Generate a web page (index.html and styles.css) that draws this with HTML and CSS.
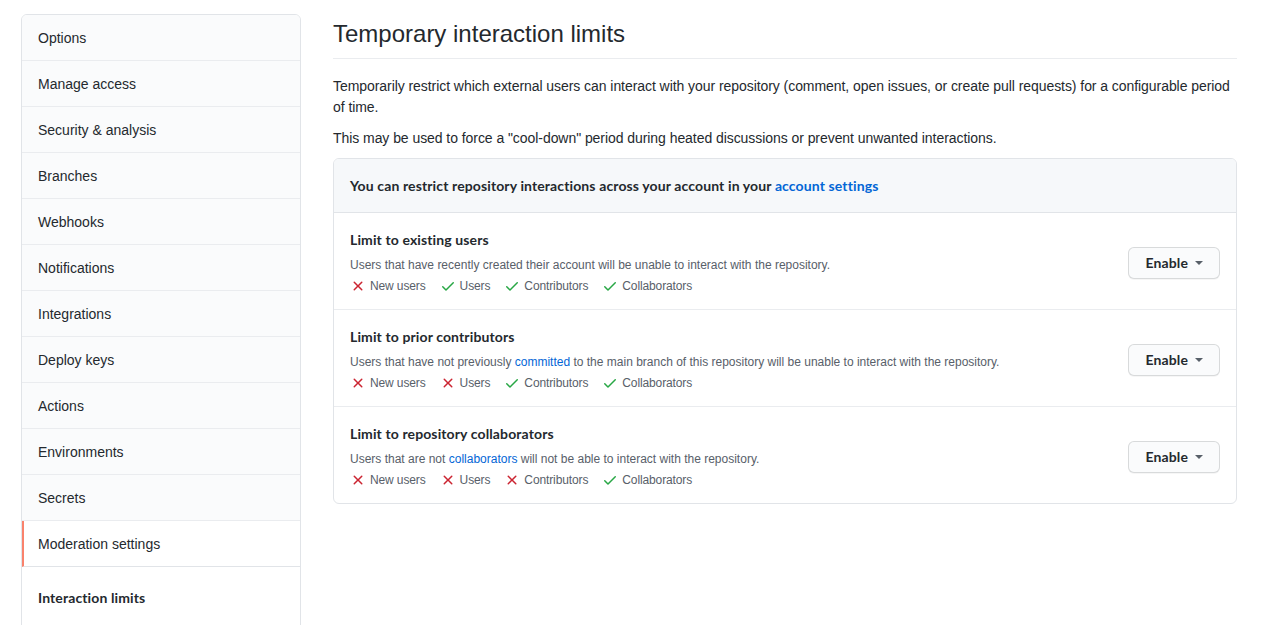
FILE: index.html
```html
<!DOCTYPE html>
<html lang="en">
<head>
<meta charset="utf-8">
<title>Interaction limits</title>
<link rel="stylesheet" href="styles.css">
</head>
<body>
<div class="layout">
  <nav class="menu">
    <a class="menu-item">Options</a>
    <a class="menu-item">Manage access</a>
    <a class="menu-item">Security &amp; analysis</a>
    <a class="menu-item">Branches</a>
    <a class="menu-item">Webhooks</a>
    <a class="menu-item">Notifications</a>
    <a class="menu-item">Integrations</a>
    <a class="menu-item">Deploy keys</a>
    <a class="menu-item">Actions</a>
    <a class="menu-item">Environments</a>
    <a class="menu-item">Secrets</a>
    <a class="menu-item selected">Moderation settings</a>
    <div class="menu-sub">
      <a class="menu-subitem">Interaction limits</a>
    </div>
  </nav>
  <main class="content">
    <h2 class="subhead">Temporary interaction limits</h2>
    <p class="lead">Temporarily restrict which external users can interact with your repository (comment, open issues, or create pull requests) for a configurable period of time.</p>
    <p class="lead last">This may be used to force a "cool-down" period during heated discussions or prevent unwanted interactions.</p>
    <div class="box">
      <div class="box-header">You can restrict repository interactions across your account in your <a class="link">account settings</a></div>
      <div class="box-row">
        <div class="row-body">
          <div class="row-title">Limit to existing users</div>
          <div class="row-desc">Users that have recently created their account will be unable to interact with the repository.</div>
          <ul class="perm-list">
            <li class="perm"><svg class="ico no" viewBox="0 0 16 16" width="16" height="16"><path d="M3.72 3.72a.75.75 0 011.06 0L8 6.94l3.22-3.22a.75.75 0 111.06 1.06L9.06 8l3.22 3.22a.75.75 0 11-1.060 1.06L8 9.06l-3.22 3.22a.75.75 0 01-1.06-1.06L6.94 8 3.72 4.78a.75.75 0 010-1.06z"/></svg>New users</li>
            <li class="perm"><svg class="ico yes" viewBox="0 0 16 16" width="16" height="16"><path d="M13.78 4.22a.75.75 0 010 1.06l-7.25 7.25a.75.75 0 01-1.06 0L2.22 9.28a.75.75 0 011.06-1.06L6 10.94l6.72-6.72a.75.75 0 011.06 0z"/></svg>Users</li>
            <li class="perm"><svg class="ico yes" viewBox="0 0 16 16" width="16" height="16"><path d="M13.78 4.22a.75.75 0 010 1.06l-7.25 7.25a.75.75 0 01-1.06 0L2.22 9.28a.75.75 0 011.06-1.06L6 10.94l6.72-6.72a.75.75 0 011.06 0z"/></svg>Contributors</li>
            <li class="perm"><svg class="ico yes" viewBox="0 0 16 16" width="16" height="16"><path d="M13.78 4.22a.75.75 0 010 1.06l-7.25 7.25a.75.75 0 01-1.06 0L2.22 9.28a.75.75 0 011.06-1.06L6 10.94l6.72-6.72a.75.75 0 011.06 0z"/></svg>Collaborators</li>
          </ul>
        </div>
        <button class="btn">Enable <span class="caret"></span></button>
      </div>
      <div class="box-row">
        <div class="row-body">
          <div class="row-title">Limit to prior contributors</div>
          <div class="row-desc">Users that have not previously <a class="link">committed</a> to the main branch of this repository will be unable to interact with the repository.</div>
          <ul class="perm-list">
            <li class="perm"><svg class="ico no" viewBox="0 0 16 16" width="16" height="16"><path d="M3.72 3.72a.75.75 0 011.06 0L8 6.94l3.22-3.22a.75.75 0 111.06 1.06L9.06 8l3.22 3.22a.75.75 0 11-1.060 1.06L8 9.06l-3.22 3.22a.75.75 0 01-1.06-1.06L6.94 8 3.72 4.78a.75.75 0 010-1.06z"/></svg>New users</li>
            <li class="perm"><svg class="ico no" viewBox="0 0 16 16" width="16" height="16"><path d="M3.72 3.72a.75.75 0 011.06 0L8 6.94l3.22-3.22a.75.75 0 111.06 1.06L9.06 8l3.22 3.22a.75.75 0 11-1.060 1.06L8 9.06l-3.22 3.22a.75.75 0 01-1.06-1.06L6.94 8 3.72 4.78a.75.75 0 010-1.06z"/></svg>Users</li>
            <li class="perm"><svg class="ico yes" viewBox="0 0 16 16" width="16" height="16"><path d="M13.78 4.22a.75.75 0 010 1.06l-7.25 7.25a.75.75 0 01-1.06 0L2.22 9.28a.75.75 0 011.06-1.06L6 10.94l6.72-6.72a.75.75 0 011.06 0z"/></svg>Contributors</li>
            <li class="perm"><svg class="ico yes" viewBox="0 0 16 16" width="16" height="16"><path d="M13.78 4.22a.75.75 0 010 1.06l-7.25 7.25a.75.75 0 01-1.06 0L2.22 9.28a.75.75 0 011.06-1.06L6 10.94l6.72-6.72a.75.75 0 011.06 0z"/></svg>Collaborators</li>
          </ul>
        </div>
        <button class="btn">Enable <span class="caret"></span></button>
      </div>
      <div class="box-row">
        <div class="row-body">
          <div class="row-title">Limit to repository collaborators</div>
          <div class="row-desc">Users that are not <a class="link">collaborators</a> will not be able to interact with the repository.</div>
          <ul class="perm-list">
            <li class="perm"><svg class="ico no" viewBox="0 0 16 16" width="16" height="16"><path d="M3.72 3.72a.75.75 0 011.06 0L8 6.94l3.22-3.22a.75.75 0 111.06 1.06L9.06 8l3.22 3.22a.75.75 0 11-1.060 1.06L8 9.06l-3.22 3.22a.75.75 0 01-1.06-1.06L6.94 8 3.72 4.78a.75.75 0 010-1.06z"/></svg>New users</li>
            <li class="perm"><svg class="ico no" viewBox="0 0 16 16" width="16" height="16"><path d="M3.72 3.72a.75.75 0 011.06 0L8 6.94l3.22-3.22a.75.75 0 111.06 1.06L9.06 8l3.22 3.22a.75.75 0 11-1.060 1.06L8 9.06l-3.22 3.22a.75.75 0 01-1.06-1.06L6.94 8 3.72 4.78a.75.75 0 010-1.06z"/></svg>Users</li>
            <li class="perm"><svg class="ico no" viewBox="0 0 16 16" width="16" height="16"><path d="M3.72 3.72a.75.75 0 011.06 0L8 6.94l3.22-3.22a.75.75 0 111.06 1.06L9.06 8l3.22 3.22a.75.75 0 11-1.060 1.06L8 9.06l-3.22 3.22a.75.75 0 01-1.06-1.06L6.94 8 3.72 4.78a.75.75 0 010-1.06z"/></svg>Contributors</li>
            <li class="perm"><svg class="ico yes" viewBox="0 0 16 16" width="16" height="16"><path d="M13.78 4.22a.75.75 0 010 1.06l-7.25 7.25a.75.75 0 01-1.06 0L2.22 9.28a.75.75 0 011.06-1.06L6 10.94l6.72-6.72a.75.75 0 011.06 0z"/></svg>Collaborators</li>
          </ul>
        </div>
        <button class="btn">Enable <span class="caret"></span></button>
      </div>
    </div>
  </main>
</div>
</body>
</html>
```

FILE: styles.css
```css
* { box-sizing: border-box; }
html, body { margin: 0; padding: 0; background: #fff; }
body {
  font-family: "Liberation Sans", Arial, sans-serif;
  font-size: 14px;
  line-height: 1.5;
  color: #24292e;
  overflow: hidden;
  height: 625px;
}
.layout {
  display: grid;
  grid-template-columns: 280px 1fr;
  column-gap: 32px;
  padding: 14px 47px 0 21px;
  align-items: start;
}
.menu {
  border: 1px solid #e1e4e8;
  border-radius: 6px;
  background: #fff;
  overflow: hidden;
  display: flex;
  flex-direction: column;
}
.menu-item {
  display: block;
  padding: 13px 16px 11px;
  background: #fafbfc;
  border-bottom: 1px solid #eaecef;
  color: #24292e;
  height: 46px;
}
.menu-item.selected {
  background: #fff;
  border-left: 2px solid #f9826c;
  padding-left: 14px;
  border-bottom-color: #e1e4e8;
}
.menu-sub {
  background: #fff;
  padding: 20px 16px 40px;
}
.menu-subitem {
  font-family: Lato, "Liberation Sans", sans-serif;
  font-weight: 700;
  letter-spacing: 0.12px;
  display: block;
}
.content { min-width: 0; }
.subhead {
  font-size: 24px;
  font-weight: 400;
  line-height: 36px;
  margin: 2px 0 0;
  padding-bottom: 6px;
  border-bottom: 1px solid #eaecef;
}
.lead {
  margin: 0 0 10px;
  letter-spacing: -0.06px;
}
.lead.last { margin-bottom: 9px; }
.subhead + .lead { margin-top: 17px; }
.link { color: #0366d6; text-decoration: none; }
.box {
  border: 1px solid #e1e4e8;
  border-radius: 6px;
  overflow: hidden;
}
.box-header {
  background: #f6f8fa;
  padding: 16px;
  font-family: Lato, "Liberation Sans", sans-serif;
  font-weight: 700;
  letter-spacing: 0.12px;
  line-height: 21px;
  border-bottom: 1px solid #e1e4e8;
}
.box-row {
  display: flex;
  align-items: center;
  justify-content: space-between;
  padding: 16px 16px 14px;
  border-bottom: 1px solid #eaecef;
}
.box-row:last-child { border-bottom: 0; }
.row-title {
  font-family: Lato, "Liberation Sans", sans-serif;
  font-weight: 700;
  letter-spacing: 0.12px;
  line-height: 21px;
}
.row-desc {
  font-size: 12px;
  line-height: 18px;
  color: #586069;
  margin-top: 6px;
}
.perm-list {
  list-style: none;
  margin: 3px 0 0;
  padding: 0;
  display: flex;
  font-size: 12px;
  line-height: 18px;
  color: #586069;
  letter-spacing: -0.12px;
}
.perm {
  display: flex;
  align-items: center;
  margin-right: 14px;
}
.ico { margin-right: 4px; flex: none; }
.ico.no { fill: #cb2431; }
.ico.yes { fill: #28a745; }
.btn {
  font-family: Lato, "Liberation Sans", sans-serif;
  font-size: 14px;
  font-weight: 700;
  letter-spacing: 0.1px;
  line-height: 20px;
  color: #24292e;
  background: #fafbfc;
  border: 1px solid rgba(27, 31, 35, 0.15);
  border-radius: 6px;
  padding: 5px 16px 5px 17px;
  display: flex;
  align-items: center;
  gap: 7px;
  margin-top: 1px;
  box-shadow: 0 1px 0 rgba(27, 31, 35, 0.04);
}
.caret {
  width: 0;
  height: 0;
  border-top: 4px solid #586069;
  border-left: 4px solid transparent;
  border-right: 4px solid transparent;
}
```
